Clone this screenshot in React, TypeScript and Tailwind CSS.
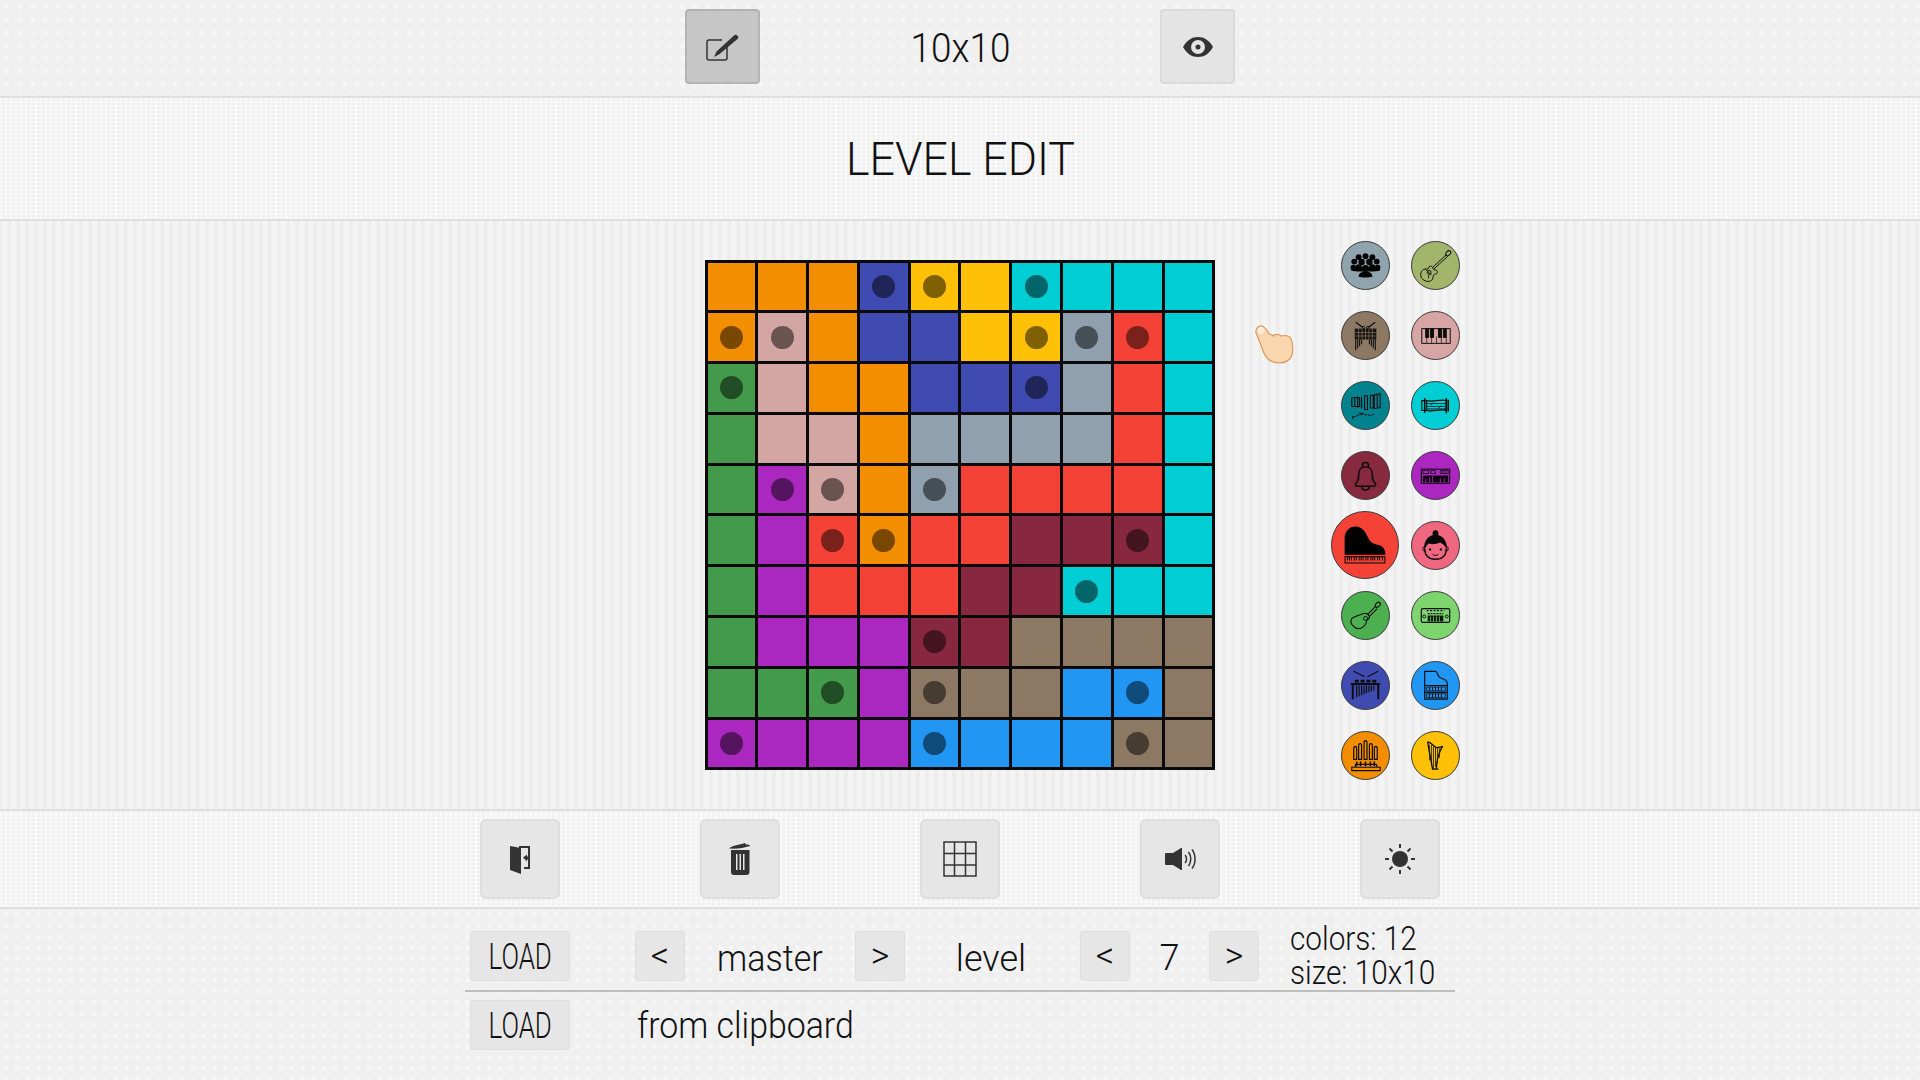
import type { ReactNode } from "react";

const COLORS: Record<string, string> = {
  O: "#f28e00",
  B: "#3f4bb0",
  Y: "#ffc107",
  T: "#00cdd4",
  P: "#d4a6a3",
  G: "#439a4a",
  S: "#90a0ae",
  R: "#f44336",
  V: "#ab28c0",
  M: "#882840",
  N: "#8d7864",
  L: "#2196f3",
};

// lower case marks a cell with a dot in it
const BOARD = [
  "OOObyYtTTT",
  "opOBBYysrT",
  "gPOOBBbSRT",
  "GPPOSSSSRT",
  "GvpOsRRRRT",
  "GVroRRMMmT",
  "GVRRRMMtTT",
  "GVVVmMNNNN",
  "GGgVnNNLlN",
  "vVVVlLLLnN",
];

function Line({ children, box = 48 }: { children: ReactNode; box?: number }) {
  return (
    <svg
      viewBox={`0 0 ${box} ${box}`}
      className="absolute inset-0 h-full w-full"
      fill="none"
      stroke="#0d0d0d"
      strokeWidth="1"
    >
      {children}
    </svg>
  );
}

const Crowd = () => (
  <Line>
    <g fill="#050505" stroke="none">
      <circle cx="17" cy="15.500" r="3" />
      <circle cx="24" cy="14.500" r="3" />
      <circle cx="31" cy="15.500" r="3" />
      <circle cx="12.500" cy="20" r="3" />
      <circle cx="35.500" cy="20" r="3" />
      <circle cx="20" cy="20.500" r="3.300" />
      <circle cx="28" cy="20.500" r="3.300" />
      <circle cx="11.500" cy="26" r="2.800" />
      <circle cx="36.500" cy="26" r="2.800" />
      <circle cx="17" cy="26" r="3.300" />
      <circle cx="31" cy="26" r="3.300" />
      <circle cx="24" cy="27" r="3.600" />
      <path d="M9 29c1-2 3-3 5-3h20c2 0 4 1 5 3-3 1-6 1-9 1H18c-3 0-6 0-9-1z" />
      <path d="M17 35.500c0-3 2-5 7-5s7 2 7 5c-3 1-11 1-14 0z" />
    </g>
  </Line>
);

const ElectricGuitar = () => (
  <Line>
    <path d="M21 26l14-13M22.500 27.500l14-13" />
    <ellipse cx="37" cy="11.500" rx="2" ry="3" transform="rotate(45 37 11.500)" />
    <path d="M20 25c-2-1-3 0-3 2-1 1-3 0-5 1-4 2-4 8-1 10 3 3 8 3 10 0 1-2 0-4 2-5 2 0 3-1 3-3-1-2-3-1-4-2-1-1 0-2-2-3z" />
    <circle cx="17.500" cy="31" r="2" />
    <path d="M17 37v-3M14 28l6 6" />
  </Line>
);

const Marimba = () => (
  <Line>
    <path d="M14 10.500l7 5M34 10.500l-7 5" strokeWidth="1.200" />
    <circle cx="22" cy="16" r="1.300" />
    <circle cx="26.500" cy="16" r="1.300" />
    <rect x="13.500" y="17.500" width="21" height="10" fill="#171310" />
    <path d="M13.500 21h21M13.500 24.500h21M17 17v11M20.500 17v11M24 17v11M27.500 17v11M31 17v11" stroke="#8d7864" strokeWidth=".7" />
    <path d="M14 28v11M16 28v9M18 28v7M20 28v5M28 28v5M30 28v7M32 28v9M34 28v11" strokeWidth="1.100" />
  </Line>
);

const PianoKeys = () => (
  <Line>
    <rect x="10" y="17" width="29" height="15" />
    <path d="M15 25v7M20 25v7M25 25v7M30 25v7M35 25v7" strokeWidth=".7" />
    <path d="M14 17h3v9h-3zM19 17h3v9h-3zM27 17h3v9h-3zM32 17h3v9h-3z" fill="#0d0d0d" />
  </Line>
);

const Xylophone = () => (
  <Line>
    <path d="M10 16h8v9h-8zM13 16v9M16 14.500v12" strokeWidth="1.100" />
    <path d="M20 15v12M23 14v14h3V14zM29 13.500h3v13h-3zM33 13l6-1v14l-6 1zM36 12.500v14" strokeWidth="1.100" />
    <path d="M11 36l9-3 9 1 4-1" strokeWidth="1" strokeDasharray="3 1" />
    <path d="M11 35v3M17 32h5" strokeWidth="1" />
  </Line>
);

const Koto = () => (
  <Line>
    <path d="M10 19h5v10h-5zM15 19c6 2 14-2 20 0v10c-6-2-14 2-20 0z" strokeWidth="1.100" />
    <path d="M13 16.500v15M35 16.500v15.500M37 18v12" strokeWidth="1.600" />
    <path d="M15 22h20M15 25h20M15 27.500h20M22 21l-3 3M30 24l-3 3" strokeWidth=".8" />
  </Line>
);

const Bell = () => (
  <Line>
    <g strokeWidth="1.600">
      <path d="M21 15v-2c0-3 6-3 6 0v2" />
      <path d="M14 32c3-2 3-5 3-9 0-5 3-8 7-8s7 3 7 8c0 4 0 7 3 9 1 2 0 3-2 3H16c-2 0-3-1-2-3z" />
      <path d="M20 35c0 5 8 5 8 0" />
    </g>
  </Line>
);

const Synth = () => (
  <Line>
    <rect x="9.500" y="17.500" width="29" height="14.500" strokeWidth="1.100" />
    <path d="M11 19h6v3h-6zM19 19h5v3h-5zM29 19h8v3h-8zM31 19v3M34 19v3" strokeWidth=".8" />
    <path d="M11 24h26v7H11z" fill="#120316" stroke="none" />
    <path d="M14 27v4M18 26v5M21 24v7M29 27v4M33 27v4" stroke="#ab28c0" strokeWidth=".8" />
  </Line>
);

const GrandPiano = () => (
  <Line box={68}>
    <path
      d="M13 44V27c0-7 5-12 11-12 8 0 11 7 14 13 2 4 6 5 10 6 4 1 7 4 7 10z"
      fill="#000"
      stroke="none"
    />
    <rect x="13.500" y="46" width="41" height="6.500" strokeWidth="1.100" />
    <path
      d="M16 46v4M18 46v4M20 46v4M23 46v4M25 46v4M28 46v4M30 46v4M32 46v4M35 46v4M37 46v4M40 46v4M42 46v4M44 46v4M47 46v4M49 46v4M52 46v4"
      strokeWidth="1.100"
    />
  </Line>
);

const Girl = () => (
  <Line>
    <circle cx="24" cy="11.500" r="3" fill="#060606" stroke="none" />
    <path d="M12.500 28c-1-9 5-15 11.500-15s12.500 6 11.500 15c-2-4-4-6-7-7-4 2-10 2-12 1-1 2-3 4-4 6z" fill="#060606" stroke="none" />
    <path d="M13 27c0 7 4 11 11 11s11-4 11-11" strokeWidth="1.400" />
    <path d="M12.500 25c-2 0-2 5 .5 5M35.500 25c2 0 2 5-.5 5" strokeWidth="1" />
    <circle cx="18.500" cy="28" r="1.200" fill="#060606" stroke="none" />
    <circle cx="29.500" cy="28" r="1.200" fill="#060606" stroke="none" />
    <path d="M21 33c1.500 1.500 4.500 1.500 6 0" />
  </Line>
);

const AcousticGuitar = () => (
  <Line>
    <path d="M26 23l8-8M28 25l8-8" strokeWidth="1.100" />
    <ellipse cx="36.500" cy="13" rx="2" ry="3" transform="rotate(45 36.500 13)" strokeWidth="1.100" />
    <path d="M22 22c3-1 5 1 6 3 0 2-1 3-2 3-1 1-1 3-2 5-2 4-7 6-11 3s-5-6-3-9c2-2 5-2 6-3 2 0 3-1 6-2z" strokeWidth="1.100" />
    <circle cx="24" cy="27" r="2" strokeWidth="1" />
  </Line>
);

const Keyboard = () => (
  <Line>
    <rect x="9.500" y="17" width="29" height="14" rx="1.500" strokeWidth="1.200" />
    <path d="M15 19h18" strokeWidth="1.300" strokeDasharray="2 1.500" />
    <path d="M16 24h16v6H16z" fill="#0a1a0a" stroke="none" />
    <path d="M19 25v5M22 25v5M25 25v5M28 25v5" stroke="#7ed56f" strokeWidth=".8" />
    <circle cx="12.500" cy="25" r="1.500" />
    <circle cx="35.500" cy="25" r="1.500" />
    <path d="M16 22h16" strokeWidth="1.200" strokeDasharray="2 1" />
  </Line>
);

const Vibraphone = () => (
  <Line>
    <path d="M12 9.500l11 5.500M37 9.500l-11 5.500" strokeWidth="1.200" />
    <path d="M13 18h4v3h-4zM19 18h4v3h-4zM25 18h4v3h-4zM31 18h4v3h-4z" fill="#0d0d0d" stroke="none" />
    <path d="M9 21.500h30v2H9z" fill="#0d0d0d" stroke="none" />
    <path d="M11 23v15M37 23v15" strokeWidth="2" />
    <path d="M15 24v12M17.500 24v11M20 24v10M22.500 24v9M25 24v8M27.500 24v7M30 24v6M32.500 24v5" strokeWidth="1.200" />
  </Line>
);

const Harpsichord = () => (
  <Line>
    <path d="M13 38V9.500h11c2 0 2 4 4 6 2 2 8 2 8 6v16.500z" strokeWidth="1.200" />
    <path d="M13 24h23M13 31h23" strokeWidth="1.200" />
    <path d="M15 25.500h19v4H15zM15 32.500h19v4H15z" strokeWidth=".8" />
    <path d="M18 25.500v4M21 25.500v4M24 25.500v4M27 25.500v4M30 25.500v4M18 32.500v4M21 32.500v4M24 32.500v4M27 32.500v4M30 32.500v4" strokeWidth="1" />
  </Line>
);

const Organ = () => (
  <Line>
    <g strokeWidth="1.200">
      <path d="M12 17c0-3 3-3 3 0v11h-3zM17 14c0-3 3-3 3 0v14h-3zM22.500 11c0-3 3-3 3 0v17h-3zM28 14c0-3 3-3 3 0v14h-3zM33 17c0-3 3-3 3 0v11h-3z" />
      <path d="M10 36h29v3.500H10zM13 36l1-3h21l1 3z" />
    </g>
    <path d="M15 30v5M19 30v5M24 30v5M29 30v5M33 30v5" strokeWidth="1.600" />
  </Line>
);

const Harp = () => (
  <Line>
    <path d="M16 10c1 8 3 16 5 28h6M16 10c3 0 6 5 9 6 3 0 5-1 6-1-4 7-6 15-6 23" strokeWidth="1.300" />
    <path d="M18 13v16M20 13.500v21M22 15v23M24 15.500v20M26 16v16M28 16.500v10" strokeWidth=".8" />
  </Line>
);

const PALETTE: { color: string; icon: ReactNode; big?: boolean }[] = [
  { color: "#90a4ae", icon: <Crowd /> },
  { color: "#a2b56a", icon: <ElectricGuitar /> },
  { color: "#8d7864", icon: <Marimba /> },
  { color: "#d7a6a4", icon: <PianoKeys /> },
  { color: "#00838f", icon: <Xylophone /> },
  { color: "#00cdd4", icon: <Koto /> },
  { color: "#872a40", icon: <Bell /> },
  { color: "#ab27c0", icon: <Synth /> },
  { color: "#f44336", icon: <GrandPiano />, big: true },
  { color: "#f06880", icon: <Girl /> },
  { color: "#4caf50", icon: <AcousticGuitar /> },
  { color: "#7ed56f", icon: <Keyboard /> },
  { color: "#3f4bb0", icon: <Vibraphone /> },
  { color: "#2196f3", icon: <Harpsichord /> },
  { color: "#f28e00", icon: <Organ /> },
  { color: "#ffc107", icon: <Harp /> },
];

function Instrument({ color, icon, big }: { color: string; icon: ReactNode; big?: boolean }) {
  return (
    <div className="flex h-[70px] w-[70px] items-center justify-center">
      <div
        className={`relative rounded-full border-[1.5px] border-[#3a3a3a] ${big ? "h-[68px] w-[68px]" : "h-[49px] w-[49px]"}`}
        style={{ backgroundColor: color }}
      >
        {icon}
      </div>
    </div>
  );
}

function Board() {
  return (
    <div className="grid h-[510px] w-[510px] grid-cols-10 grid-rows-10 gap-[3px] bg-[#0a0a0a] p-[2.5px]">
      {BOARD.join("")
        .split("")
        .map((c, i) => {
          const dot = c === c.toLowerCase();
          return (
            <div
              key={i}
              className="flex items-center justify-center"
              style={{ backgroundColor: COLORS[c.toUpperCase()] }}
            >
              {dot && <span className="h-[23px] w-[23px] rounded-full bg-black/50" />}
            </div>
          );
        })}
    </div>
  );
}

function IconBtn({ children, active }: { children: ReactNode; active?: boolean }) {
  return (
    <button
      className={`flex h-[75px] w-[75px] items-center justify-center rounded-[4px] border-2 ${
        active ? "border-[#b4b4b4] bg-[#c6c6c6]" : "border-[#dadada] bg-[#e4e4e4]"
      }`}
    >
      {children}
    </button>
  );
}

function ToolBtn({ children }: { children: ReactNode }) {
  return (
    <button className="flex h-[80px] w-[80px] items-center justify-center rounded-[6px] border-2 border-[#dedede] bg-[#e6e6e6]">
      {children}
    </button>
  );
}

function SmallBtn({ children, wide }: { children: ReactNode; wide?: boolean }) {
  return (
    <button
      className={`flex h-[50px] items-center justify-center rounded-[3px] border border-[#dedede] bg-[#e6e6e6] text-[#111] ${
        wide ? "w-[100px] text-[37px]" : "w-[50px] text-[36px]"
      }`}
    >
      <span className={wide ? "inline-block scale-x-[.7]" : "inline-block"}>{children}</span>
    </button>
  );
}

export default function App() {
  return (
    <div className="flex h-[1080px] w-[1920px] flex-col overflow-hidden bg-[#f2f2f2] font-['Roboto',sans-serif] font-light text-[#111]">
      <header className="flex h-[98px] shrink-0 items-center justify-center border-b-2 border-[#dedede] bg-[#f0f0f0] bg-[radial-gradient(circle,#f6f6f6_1.5px,transparent_3.5px)] bg-[size:13px_13px] pb-[3px]">
        <IconBtn active>
          <svg viewBox="0 0 34 28" className="h-[28px] w-[34px]" fill="none">
            <path d="M16 7H3a2 2 0 0 0-2 2v16a2 2 0 0 0 2 2h16a2 2 0 0 0 2-2V14" stroke="#333" strokeWidth="1.500" />
            <path d="M8 24l2.500-5.500L28 2.500c1-1 2.500-1 3.300 0l.5.5c.8 1 .8 2-.3 3L13 21.500z" fill="#333" />
          </svg>
        </IconBtn>
        <div className="mt-[4px] w-[400px] text-center text-[41px] leading-none">
          <span className="inline-block scale-x-[.9]">10x10</span>
        </div>
        <IconBtn>
          <svg viewBox="0 0 30 20" className="h-[20px] w-[30px]">
            <path
              fillRule="evenodd"
              d="M0 10C4 3 9 0 15 0s11 3 15 10c-4 7-9 10-15 10S4 17 0 10zm15-7a7 7 0 1 0 0 14 7 7 0 0 0 0-14zm0 4.500a2.500 2.500 0 1 1 0 5 2.500 2.500 0 0 1 0-5z"
              fill="#333"
            />
          </svg>
        </IconBtn>
      </header>

      <section className="flex h-[123px] shrink-0 items-center justify-center border-b-2 border-[#dedede] bg-[#f4f4f4] bg-[repeating-linear-gradient(90deg,rgba(255,255,255,.5)_0,rgba(255,255,255,.5)_2px,transparent_2px,transparent_5px),repeating-linear-gradient(0deg,#f5f5f5_0,#f5f5f5_2px,#f0f0f0_2px,#f0f0f0_4px)]">
        <h1 className="text-[47px] leading-none">
          <span className="inline-block scale-x-[.95]">LEVEL EDIT</span>
        </h1>
      </section>

      <main className="grid h-[588px] shrink-0 grid-cols-[1fr_auto_1fr] items-start bg-[repeating-linear-gradient(90deg,#ebebeb_0,#f4f4f4_3px,#f4f4f4_6px,#ebebeb_9px)]">
        <div />
        <div className="pt-[39px]">
          <Board />
        </div>
        <div className="flex items-start pt-[11px]">
          <svg viewBox="-1 -1 40 41" className="ml-[39px] mt-[92px] h-[41px] w-[40px]">
            <path
              d="M2 10C-1 5 3 0 7 1c3 1 5 4 7 8 2 0 3 1 4 2 3-3 7-1 8 0 4-1 10-1 11 6 1 5 1 10 0 13-1 5-7 8-13 8-8 0-13-4-16-12-1-4-4-10-6-16z"
              fill="#f9d6ae"
              stroke="#d9985f"
              strokeWidth="1.200"
            />
            <ellipse cx="6" cy="5.500" rx="3.500" ry="3.500" fill="#fdebd6" />
          </svg>
          <div className="ml-[36px] -mt-[2px] grid w-[140px] grid-cols-2">
            {PALETTE.map((p, i) => (
              <Instrument key={i} {...p} />
            ))}
          </div>
        </div>
      </main>

      <section className="flex h-[100px] shrink-0 items-center justify-center gap-[140px] border-y-2 border-[#dedede] bg-[#f4f4f4] bg-[repeating-linear-gradient(90deg,rgba(255,255,255,.5)_0,rgba(255,255,255,.5)_2px,transparent_2px,transparent_5px),repeating-linear-gradient(0deg,#f5f5f5_0,#f5f5f5_2px,#f0f0f0_2px,#f0f0f0_4px)]">
        <ToolBtn>
          <svg viewBox="0 0 20 29" className="h-[29px] w-[20px]">
            <path d="M0 1h20v23h-6v-2h4V3H9V1z" fill="#333" />
            <path d="M0 1l11 2v26L0 25z" fill="#333" />
            <path d="M13 12.500l4-3v2h1v3h-1v2z" fill="#333" />
          </svg>
        </ToolBtn>
        <ToolBtn>
          <svg viewBox="0 0 22 32" className="h-[32px] w-[22px]">
            <path d="M0 5.500C4 2 10 2 16 0l1 1.500c3 0 4 .5 4 1.500C15 5 8 6 0 5.500z" fill="#333" />
            <path
              fillRule="evenodd"
              d="M2 7h18.500v22c0 2-1 3-3 3H5c-2 0-3-1-3-3zm5 4v16h1.500V11zm3.500 0v16H12V11zm3.500 0v16h1.500V11z"
              fill="#333"
            />
          </svg>
        </ToolBtn>
        <ToolBtn>
          <svg viewBox="0 0 34 36" className="h-[36px] w-[34px]" fill="none" stroke="#333" strokeWidth="1.500">
            <rect x="1" y="1" width="32" height="34" />
            <path d="M11.500 1v34M22.500 1v34M1 12.500h32M1 24h32" />
          </svg>
        </ToolBtn>
        <ToolBtn>
          <svg viewBox="0 0 31 22" className="h-[22px] w-[31px]">
            <path d="M0 6c0-1 1-1 2-1h6l8-5h1v22h-1l-8-5H2c-1 0-2 0-2-1z" fill="#333" />
            <path d="M20 7c2 2 2 6 0 8M23.500 4c3 4 3 10 0 14M27 1.500c4 5 4 14 0 19" fill="none" stroke="#333" strokeWidth="1.500" />
          </svg>
        </ToolBtn>
        <ToolBtn>
          <svg viewBox="0 0 30 30" className="h-[30px] w-[30px]">
            <circle cx="15" cy="15" r="8" fill="#333" />
            <path d="M15 0v4M15 26v4M0 15h4M26 15h4M4.500 4.500l3 3M22.500 22.500l3 3M25.500 4.500l-3 3M7.500 22.500l-3 3" stroke="#333" strokeWidth="2" />
          </svg>
        </ToolBtn>
      </section>

      <footer className="grow bg-[#f0f0f0] bg-[radial-gradient(circle,#f6f6f6_1.5px,transparent_3px)] bg-[size:11px_11px] pt-[22px] text-[36px] leading-none">
        <div className="mx-auto w-[990px]">
          <div className="flex h-[61px] items-start border-b-2 border-[#bdbdbd] pl-[5px]">
            <SmallBtn wide>LOAD</SmallBtn>
            <div className="ml-[65px]">
              <SmallBtn>&lt;</SmallBtn>
            </div>
            <div className="flex h-[50px] w-[170px] items-center justify-center pt-[5px]">
              <span className="inline-block scale-x-[.945]">master</span>
            </div>
            <SmallBtn>&gt;</SmallBtn>
            <div className="flex h-[50px] w-[175px] items-center justify-center pt-[5px] pr-[3px]">
              <span className="inline-block">level</span>
            </div>
            <SmallBtn>&lt;</SmallBtn>
            <div className="flex h-[50px] w-[79px] items-center justify-center pt-[3px]">7</div>
            <SmallBtn>&gt;</SmallBtn>
            <div className="ml-[31px] -mt-[9px] origin-left scale-x-[.9] text-[33px] leading-[34px] whitespace-nowrap">
              <div>colors: 12</div>
              <div>size: 10x10</div>
            </div>
          </div>
          <div className="mt-[8px] flex items-center pl-[5px]">
            <SmallBtn wide>LOAD</SmallBtn>
            <div className="ml-[67px] origin-left scale-x-[.94] pt-[1px] whitespace-nowrap">from clipboard</div>
          </div>
        </div>
      </footer>
    </div>
  );
}
